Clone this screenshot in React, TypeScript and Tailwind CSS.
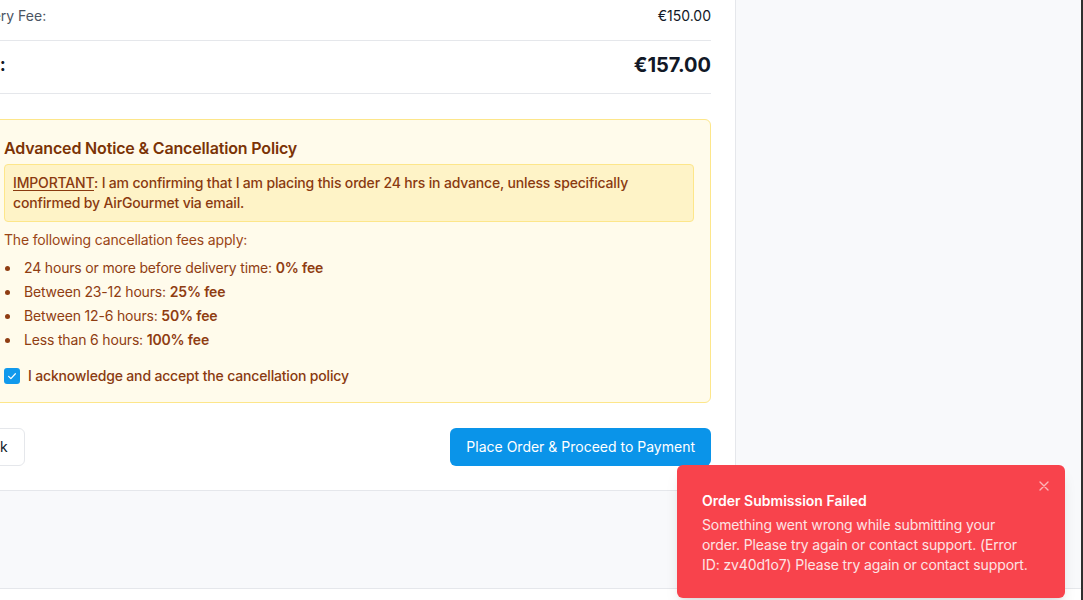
import React from "react";

export default function App() {
  const font = { fontFamily: "Inter, 'Noto Sans', Arial, sans-serif" };
  return (
    <div className="relative h-[600px] w-[1083px] overflow-hidden bg-white flex" style={font}>
      <div className="flex-1 flex flex-col min-w-0">
        <div className="bg-[#f8f9fb] pb-[97px]">
          <div className="-ml-[37px] w-[773px] bg-white border-r border-b border-[#e5e7eb] px-6 pb-6">
            {/* summary */}
            <div className="-mt-[6px] flex items-center justify-between border-b border-[#e5e7eb] pt-3 pb-[14px] text-sm leading-5">
              <span className="-ml-[27px] text-[#4b5563]">Delivery Fee:</span>
              <span className="text-[#111827]">€150.00</span>
            </div>
            <div className="flex items-center justify-between border-b border-[#e5e7eb] pt-[10px] pb-[14px]">
              <span className="-ml-[31px] text-lg font-bold text-[#111827]">Total:</span>
              <span className="text-xl font-bold leading-7 text-[#111827]">€157.00</span>
            </div>

            {/* policy */}
            <div className="mt-[25px] rounded-md border border-[#fde68a] bg-[#fffbeb] p-4 text-sm leading-5 tracking-[-0.012em] text-[#92400e]">
              <h3 className="text-base font-semibold leading-6 tracking-[-0.01em] text-[#7b3306] mb-[4px]">
                Advanced Notice &amp; Cancellation Policy
              </h3>
              <div className="rounded border border-[#fde68a] bg-[#fef3c7] p-2 font-medium text-[#8a3a10]">
                <span className="underline underline-offset-2">IMPORTANT</span>: I am confirming that I am placing this order 24 hrs in advance, unless specifically confirmed by AirGourmet via email.
              </div>
              <p className="mt-2 text-[#9a4516]">The following cancellation fees apply:</p>
              <ul className="mt-2 flex flex-col gap-1 text-[#8f3d12]">
                {[
                  ["24 hours or more before delivery time: ", "0% fee"],
                  ["Between 23-12 hours: ", "25% fee"],
                  ["Between 12-6 hours: ", "50% fee"],
                  ["Less than 6 hours: ", "100% fee"],
                ].map(([a, b]) => (
                  <li key={a} className="flex items-center">
                    <span className="ml-[1px] mr-[14px] inline-block h-[5px] w-[5px] rounded-full bg-[#8f3d12]" />
                    <span>
                      {a}
                      <span className="font-semibold">{b}</span>
                    </span>
                  </li>
                ))}
              </ul>
              <label className="mt-4 flex items-center gap-2 font-medium text-[#8a3a10]">
                <span className="flex h-4 w-4 items-center justify-center rounded-[3px] bg-[#1199ec]">
                  <svg width="12" height="12" viewBox="0 0 16 16" fill="none">
                    <path d="M3.5 8.5l3 3 6-6.5" stroke="white" strokeWidth="1.6" strokeLinecap="round" strokeLinejoin="round" />
                  </svg>
                </span>
                I acknowledge and accept the cancellation policy
              </label>
            </div>

            {/* buttons */}
            <div className="mt-[25px] flex items-center justify-between">
              <button className="-ml-[53px] flex h-[38px] items-center gap-2 rounded-md border border-[#e5e7eb] bg-white px-4 text-sm text-[#111827]">
                <svg width="16" height="16" viewBox="0 0 24 24" fill="none" stroke="currentColor" strokeWidth="2">
                  <path d="M19 12H5M12 19l-7-7 7-7" />
                </svg>
                Back
              </button>
              <button className="flex h-[38px] items-center rounded-md bg-[#0a94e9] px-4 text-sm text-white">
                Place Order &amp; Proceed to Payment
              </button>
            </div>
          </div>
        </div>
        <div className="flex-1 border-t border-[#e5e7eb] bg-white" />
      </div>
      <div className="w-[2px] bg-[#2f2f2f]" />

      {/* toast */}
      <div className="absolute left-[677px] top-[465px] w-[388px] rounded-md bg-[#f8434c] pl-[25px] pr-8 pt-[26px] pb-[23px] text-sm leading-5 shadow-lg">
        <button className="absolute right-[13px] top-[13px] text-[#fdb4b8]">
          <svg width="16" height="16" viewBox="0 0 24 24" fill="none" stroke="currentColor" strokeWidth="2" strokeLinecap="round">
            <path d="M6 6l12 12M18 6L6 18" />
          </svg>
        </button>
        <div className="font-semibold text-white">Order Submission Failed</div>
        <div className="mt-[4px] w-[332px] tracking-[-0.008em] text-[#fde4e5]">
          Something went wrong while submitting your order. Please try again or contact support. (Error ID: zv40d1o7) Please try again or contact support.
        </div>
      </div>
    </div>
  );
}
